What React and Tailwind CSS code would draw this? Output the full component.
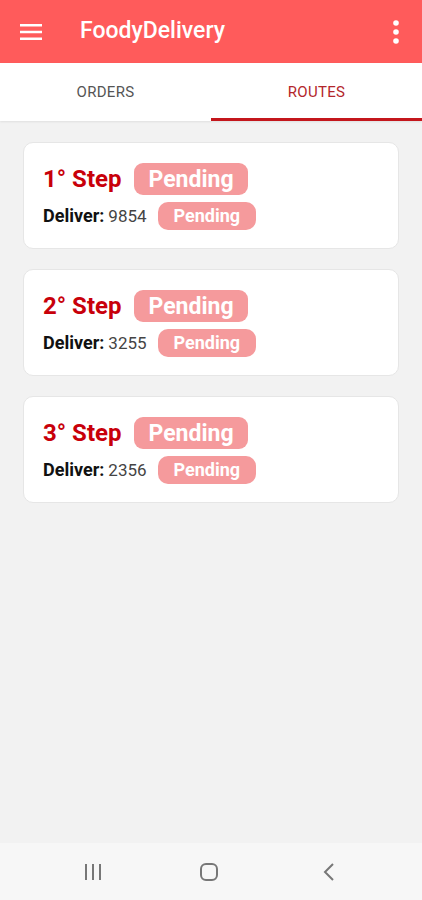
import React, { useState } from 'react';

const steps = [
  { id: 1, deliver: '9854' },
  { id: 2, deliver: '3255' },
  { id: 3, deliver: '2356' },
];

const StepCard = ({ id, deliver }) => (
  <div className="bg-white rounded-[10px] border border-[#e6e6e6] px-[19px] pt-[20px] pb-[19px] h-[107px]">
    <div className="flex items-center">
      <span className="text-[24px] font-bold text-[#c8000a] leading-none">{id}° Step</span>
      <span className="ml-[13px] h-[32px] px-[14px] flex items-center rounded-[9px] bg-[#f59a9c] text-white text-[23px] font-bold leading-none">
        Pending
      </span>
    </div>
    <div className="flex items-center mt-[7px]">
      <span className="text-[18px] font-bold text-[#111] leading-none">Deliver:</span>
      <span className="ml-[4px] text-[17px] text-[#444] leading-none">{deliver}</span>
      <span className="ml-[11px] h-[28px] px-[16px] flex items-center rounded-[10px] bg-[#f59a9c] text-white text-[18px] font-bold leading-none">
        Pending
      </span>
    </div>
  </div>
);

export default function App() {
  const [tab, setTab] = useState('routes');

  return (
    <div className="w-[422px] h-[900px] flex flex-col bg-[#f2f2f2] font-['Roboto',sans-serif]">
      {/* App bar */}
      <header className="h-[63px] bg-[#ff5b5b] flex items-center pl-[20px] pr-[23px] shrink-0">
        <svg width="22" height="16" viewBox="0 0 22 16" className="shrink-0">
          <rect x="0" y="0" width="22" height="2.5" fill="#fff" />
          <rect x="0" y="6.75" width="22" height="2.5" fill="#fff" />
          <rect x="0" y="13.5" width="22" height="2.5" fill="#fff" />
        </svg>
        <h1 className="ml-[38px] text-white text-[23px] font-medium flex-1">FoodyDelivery</h1>
        <svg width="6" height="24" viewBox="0 0 6 24">
          <circle cx="3" cy="3" r="2.8" fill="#fff" />
          <circle cx="3" cy="12" r="2.8" fill="#fff" />
          <circle cx="3" cy="21" r="2.8" fill="#fff" />
        </svg>
      </header>

      {/* Tabs */}
      <nav className="h-[58px] bg-white flex shrink-0 shadow-[0_1px_2px_rgba(0,0,0,0.08)]">
        {[
          { id: 'orders', label: 'ORDERS' },
          { id: 'routes', label: 'ROUTES' },
        ].map(t => (
          <button
            key={t.id}
            onClick={() => setTab(t.id)}
            className={`flex-1 flex items-center justify-center text-[15px] tracking-[0.3px] border-b-[3px] pt-[3px] ${
              tab === t.id ? 'text-[#b3262b] border-[#c4161c]' : 'text-[#555] border-transparent'
            }`}
          >
            {t.label}
          </button>
        ))}
      </nav>

      {/* Steps */}
      <main className="flex-1 px-[23px] pt-[21px] flex flex-col gap-[20px]">
        {steps.map(s => (
          <StepCard key={s.id} {...s} />
        ))}
      </main>

      {/* System nav */}
      <footer className="h-[57px] bg-[#f7f7f7] flex items-center px-[34px] shrink-0">
        <div className="flex-1 flex justify-center">
          <svg width="18" height="16" viewBox="0 0 18 16">
            <rect x="1" y="0" width="2" height="16" fill="#777" />
            <rect x="8" y="0" width="2" height="16" fill="#777" />
            <rect x="15" y="0" width="2" height="16" fill="#777" />
          </svg>
        </div>
        <div className="flex-1 flex justify-center">
          <svg width="20" height="20" viewBox="0 0 20 20" className="ml-[-4px]">
            <rect x="2" y="2" width="16" height="16" rx="5" fill="none" stroke="#777" strokeWidth="2" />
          </svg>
        </div>
        <div className="flex-1 flex justify-center">
          <svg width="14" height="18" viewBox="0 0 14 18">
            <path d="M11 1 L3 9 L11 17" fill="none" stroke="#777" strokeWidth="2" />
          </svg>
        </div>
      </footer>
    </div>
  );
}
